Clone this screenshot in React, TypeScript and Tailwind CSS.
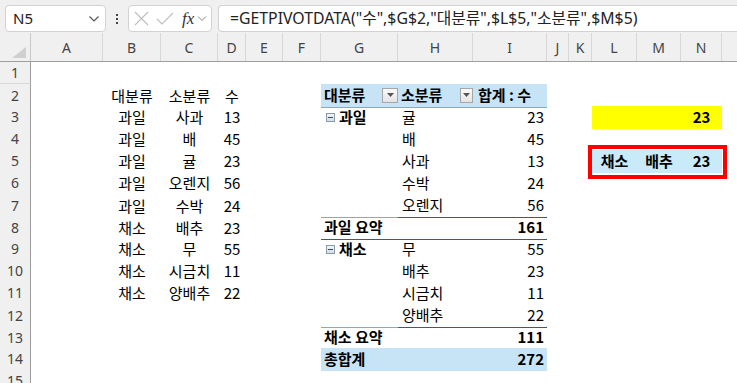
import React from 'react'

type Cell = { t?: React.ReactNode; c?: string }

const FONT = "font-['Noto_Sans_CJK_KR','Noto_Sans',sans-serif]"
const UI = "font-['Noto_Sans','Noto_Sans_CJK_KR',sans-serif]"
const COLS = ['A', 'B', 'C', 'D', 'E', 'F', 'G', 'H', 'I', 'J', 'K', 'L', 'M', 'N']

const Drop = ({ w = 'w-[16px]' }: { w?: string }) => (
  <span className={`${w} h-[15px] border border-[#a6a6a6] bg-gradient-to-b from-[#fafafa] to-[#e4e4e4] flex items-center justify-center shrink-0`}>
    <svg width="7" height="4" viewBox="0 0 7 4">
      <path d="M0 0h7L3.5 4z" fill="#555" />
    </svg>
  </span>
)

const Minus = () => (
  <span className="w-[9px] h-[9px] border border-[#8a9aa8] bg-gradient-to-b from-[#f4f6f8] to-[#d6dde3] flex items-center justify-center mr-[4px] shrink-0">
    <span className="w-[5px] h-px bg-[#3a4a5a]" />
  </span>
)

const blue = 'bg-[#c6e4f6]'
const lite = 'border-b border-[#6fb0dd]'
const dark = 'border-b border-[#2f5f86]'

const rows: Record<number, Partial<Record<string, Cell>>> = {
  2: {
    B: { t: '대분류', c: 'justify-center' },
    C: { t: '소분류', c: 'justify-center' },
    D: { t: '수', c: 'justify-center' },
    G: { t: <><span className="font-bold">대분류</span><Drop /></>, c: `${blue} ${lite} justify-between pr-0` },
    H: { t: <><span className="font-bold">소분류</span><Drop w="w-[13px]" /></>, c: `${blue} ${lite} justify-between pr-0` },
    I: { t: <span className="font-bold">합계 : 수</span>, c: `${blue} ${lite} pl-[5px]` },
  },
}

const data: [string, string, string][] = [
  ['과일', '사과', '13'],
  ['과일', '배', '45'],
  ['과일', '귤', '23'],
  ['과일', '오렌지', '56'],
  ['과일', '수박', '24'],
  ['채소', '배추', '23'],
  ['채소', '무', '55'],
  ['채소', '시금치', '11'],
  ['채소', '양배추', '22'],
]
data.forEach(([a, b, n], i) => {
  rows[i + 3] = {
    B: { t: a, c: 'justify-center' },
    C: { t: b, c: 'justify-center' },
    D: { t: n, c: 'justify-center' },
  }
})

const pivot: [number, string, string, string?][] = [
  [3, '귤', '23', '과일'],
  [4, '배', '45'],
  [5, '사과', '13'],
  [6, '수박', '24'],
  [7, '오렌지', '56'],
  [9, '무', '55', '채소'],
  [10, '배추', '23'],
  [11, '시금치', '11'],
  [12, '양배추', '22'],
]
pivot.forEach(([r, h, n, g]) => {
  const last = r === 7 || r === 12
  rows[r] = rows[r] || {}
  rows[r].G = {
    t: g ? <><Minus /><span className="font-bold">{g}</span></> : undefined,
    c: `${last ? lite : ''} pl-[5px]`,
  }
  rows[r].H = { t: h, c: `${last ? dark : ''} pl-[4px]` }
  rows[r].I = { t: n, c: `${last ? dark : ''} justify-end pr-[3px]` }
})

rows[8].G = { t: <span className="font-bold">과일 요약</span>, c: dark }
rows[8].H = { c: dark }
rows[8].I = { t: <span className="font-bold">161</span>, c: `${dark} justify-end pr-[3px]` }
rows[13] = {
  G: { t: <span className="font-bold">채소 요약</span>, c: lite },
  H: { c: lite },
  I: { t: <span className="font-bold">111</span>, c: `${lite} justify-end pr-[3px]` },
}
rows[14] = {
  G: { t: <span className="font-bold">총합계</span>, c: blue },
  H: { c: blue },
  I: { t: <span className="font-bold">272</span>, c: `${blue} justify-end pr-[3px]` },
}

rows[3].L = { c: 'bg-[#ffff00]' }
rows[3].M = { c: 'bg-[#ffff00]' }
rows[3].N = { t: <span className="font-bold">23</span>, c: 'bg-[#ffff00] justify-center' }
rows[5].L = { t: <span className="font-bold">채소</span>, c: 'bg-[#c8eaf9] justify-center' }
rows[5].M = { t: <span className="font-bold">배추</span>, c: 'bg-[#c8eaf9] justify-center' }
rows[5].N = { t: <span className="font-bold">23</span>, c: 'bg-[#c8eaf9] justify-center' }

const GRID =
  'grid grid-cols-[31px_72px_58px_57px_28px_37px_38px_77px_75px_74px_22px_23px_45px_44px_41px_1fr]'

function Toolbar() {
  return (
    <div className="h-[33px] bg-[#f0f0f0] flex items-start pt-[5px] pl-[5px] gap-0">
      <div className="w-[101px] h-[27px] bg-white border border-[#d2d2d2] rounded-[4px] flex items-center justify-between pl-[7px] pr-[5px]">
        <span className={`${UI} text-[15px] text-[#222]`}>N5</span>
        <svg width="12" height="8" viewBox="0 0 12 8">
          <path d="M1.5 1.5l4.5 4.5 4.5-4.5" fill="none" stroke="#555" strokeWidth="1.2" />
        </svg>
      </div>
      <div className="w-[22px] h-[27px] flex flex-col items-center justify-center gap-[2px]">
        <span className="w-[2px] h-[2px] bg-[#444]" />
        <span className="w-[2px] h-[2px] bg-[#444]" />
        <span className="w-[2px] h-[2px] bg-[#444]" />
      </div>
      <div className="w-[84px] h-[27px] bg-white border border-[#d2d2d2] rounded-[4px] flex items-center pl-[5px]">
        <svg width="15" height="15" viewBox="0 0 15 15" className="mr-[7px]">
          <path d="M1 1l13 13M14 1L1 14" stroke="#bdbdbd" strokeWidth="1.1" />
        </svg>
        <svg width="18" height="14" viewBox="0 0 18 14" className="mr-[8px]">
          <path d="M1 7l5 5L17 1" fill="none" stroke="#bdbdbd" strokeWidth="1.1" />
        </svg>
        <span className="font-['Liberation_Serif',serif] italic text-[17px] text-[#333] leading-none">fx</span>
        <svg width="10" height="7" viewBox="0 0 10 7" className="ml-[3px]">
          <path d="M1 1.5l4 4 4-4" fill="none" stroke="#888" strokeWidth="1" />
        </svg>
      </div>
      <div className="flex-1 ml-[6px] h-[27px] bg-white border border-[#d2d2d2] border-r-0 rounded-l-[4px] flex items-center pl-[11px]">
        <span className={`${UI} text-[15.8px] text-[#222] whitespace-nowrap`}>
          =GETPIVOTDATA("수",$G$2,"대분류",$L$5,"소분류",$M$5)
        </span>
      </div>
    </div>
  )
}

export default function App() {
  return (
    <div className="w-[737px] h-[383px] overflow-hidden bg-white relative">
      <Toolbar />
      {/* column headers */}
      <div className={`${GRID} h-[29px] bg-[#f0f0f0] border-b border-[#9f9f9f]`}>
        <div className="border-r border-[#c8c8c8] flex items-end justify-end pr-[4px] pb-[3px]">
          <svg width="14" height="11" viewBox="0 0 14 11">
            <path d="M14 0V11H0z" fill="#cfcfcf" />
          </svg>
        </div>
        {COLS.map((c) => (
          <div key={c} className={`${UI} border-r border-[#d8d8d8] flex items-center justify-center text-[14px] text-[#444]`}>
            {c}
          </div>
        ))}
        <div />
      </div>
      {/* sheet body */}
      <div className="relative">
        {Array.from({ length: 15 }, (_, i) => i + 1).map((r) => (
          <div key={r} className={`${GRID} h-[22px]`}>
            <div className={`${UI} bg-[#f0f0f0] border-r border-[#9f9f9f] border-b border-b-[#d8d8d8] flex items-center justify-center text-[14px] text-[#444]`}>
              {r}
            </div>
            {COLS.map((c) => {
              const cell = rows[r]?.[c]
              return (
                <div
                  key={c}
                  className={`${FONT} flex items-center whitespace-nowrap px-[3px] text-[15px] text-black ${cell?.c ?? ''}`}
                >
                  {cell?.t}
                </div>
              )
            })}
            <div />
          </div>
        ))}
        {/* red rectangle drawn over L5:N5 */}
        <div className="absolute left-[588px] top-[83px] w-[139px] h-[34px] border-4 border-[#ff0000] pointer-events-none" />
      </div>
    </div>
  )
}
